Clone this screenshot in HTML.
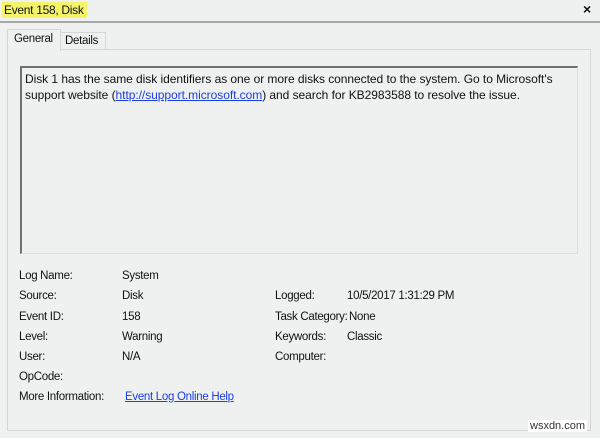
<!DOCTYPE html>
<html><head><style>
body{margin:0;width:600px;height:438px;background:#eef1f0;font-family:"Liberation Sans",sans-serif;font-size:12px;color:#111;position:relative;overflow:hidden}
.a{position:absolute;white-space:nowrap}
.f{font-size:11.5px;letter-spacing:-0.3px}
a{color:#1a3ee8;text-decoration:underline}
</style></head><body>
<div class="a" style="left:2px;top:2px;width:85px;height:16px;background:#f4f46a"></div>
<div class="a" style="left:4px;top:3px;font-size:12px;letter-spacing:-0.3px">Event 158, Disk</div>
<div class="a" style="left:583px;top:1px;font-size:14px;font-weight:bold">×</div>
<div class="a" style="left:0;top:21px;width:600px;height:2px;background:#a8a8a8"></div>
<div class="a" style="left:7px;top:49px;width:582px;height:380px;border:1px solid #d4d6d6"></div>
<div class="a" style="left:7px;top:29px;width:52px;height:21px;background:#eef1f0;border:1px solid #d4d6d6;border-bottom:none"></div>
<div class="a f" style="left:14px;top:33px">General</div>
<div class="a" style="left:60px;top:32px;width:44px;height:17px;border:1px solid #d4d6d6;border-bottom:none"></div>
<div class="a f" style="left:65px;top:35px">Details</div>
<div class="a" style="left:20px;top:66px;width:555px;height:185px;border:1px solid #ddd;border-top:2px solid #707070;border-left:2px solid #707070;background:#eef1f0"></div>
<div class="a" style="left:25px;top:71px;line-height:16px;letter-spacing:-0.05px">Disk 1 has the same disk identifiers as one or more disks connected to the system. Go to Microsoft's<br>support website (<a>http://support.microsoft.com</a>) and search for KB2983588 to resolve the issue.</div>
<div class="f">
<div class="a" style="left:19px;top:270px">Log Name:</div><div class="a" style="left:122px;top:270px">System</div>
<div class="a" style="left:19px;top:290px">Source:</div><div class="a" style="left:122px;top:290px">Disk</div>
<div class="a" style="left:275px;top:290px">Logged:</div><div class="a" style="left:347px;top:290px">10/5/2017 1:31:29 PM</div>
<div class="a" style="left:19px;top:311px">Event ID:</div><div class="a" style="left:122px;top:311px">158</div>
<div class="a" style="left:275px;top:311px">Task Category:</div><div class="a" style="left:349px;top:311px">None</div>
<div class="a" style="left:19px;top:331px">Level:</div><div class="a" style="left:122px;top:331px">Warning</div>
<div class="a" style="left:275px;top:331px">Keywords:</div><div class="a" style="left:347px;top:331px">Classic</div>
<div class="a" style="left:19px;top:351px">User:</div><div class="a" style="left:122px;top:351px">N/A</div>
<div class="a" style="left:275px;top:351px">Computer:</div>
<div class="a" style="left:19px;top:371px">OpCode:</div>
<div class="a" style="left:19px;top:391px">More Information:</div><div class="a" style="left:125px;top:391px"><a>Event Log Online Help</a></div>
</div>
<div class="a" style="left:528px;top:420px;font-size:11px;background:#fff;color:#333;padding:0 2px">wsxdn.com</div>
</body></html>
